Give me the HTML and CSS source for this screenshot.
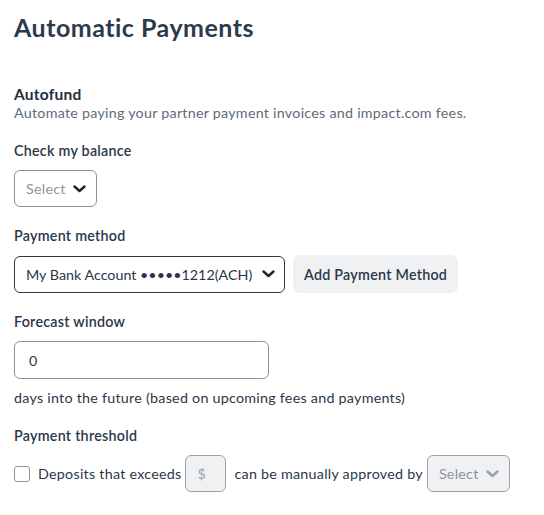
FILE: index.html
```html
<!DOCTYPE html>
<html>
<head>
<meta charset="utf-8">
<link rel="stylesheet" href="styles.css">
</head>
<body>
<div class="page">
  <h1 class="title">Automatic Payments</h1>
  <section class="section">
    <h2 class="section-title">Autofund</h2>
    <p class="section-desc">Automate paying your partner payment invoices and impact.com fees.</p>

    <div class="field">
      <div class="label">Check my balance</div>
      <div class="select select-small">
        <span class="placeholder">Select</span>
        <svg class="chev" width="13" height="8" viewBox="0 0 13 8"><path d="M1.5 1.5 L6.5 6 L11.5 1.5" fill="none" stroke="#1f2a38" stroke-width="2.5" stroke-linecap="round" stroke-linejoin="round"/></svg>
      </div>
    </div>

    <div class="field">
      <div class="label">Payment method</div>
      <div class="row">
        <div class="select select-dark select-wide">
          <span class="value">My Bank Account •••••1212(ACH)</span>
          <svg class="chev" width="13" height="8" viewBox="0 0 13 8"><path d="M1.5 1.5 L6.5 6 L11.5 1.5" fill="none" stroke="#1f2a38" stroke-width="2.5" stroke-linecap="round" stroke-linejoin="round"/></svg>
        </div>
        <button class="btn">Add Payment Method</button>
      </div>
    </div>

    <div class="field">
      <div class="label">Forecast window</div>
      <div class="input">0</div>
      <div class="hint">days into the future (based on upcoming fees and payments)</div>
    </div>

    <div class="field">
      <div class="label">Payment threshold</div>
      <div class="threshold">
        <span class="checkbox"></span>
        <span class="text">Deposits that exceeds</span>
        <span class="mini-input">$</span>
        <span class="text">can be manually approved by</span>
        <div class="select select-disabled">
          <span class="placeholder">Select</span>
          <svg class="chev" width="13" height="8" viewBox="0 0 13 8"><path d="M1.5 1.5 L6.5 6 L11.5 1.5" fill="none" stroke="#9aa1ab" stroke-width="2.5" stroke-linecap="round" stroke-linejoin="round"/></svg>
        </div>
      </div>
    </div>
  </section>
</div>
</body>
</html>
```

FILE: styles.css
```css
* { box-sizing: border-box; }
body {
  margin: 0;
  background: #fff;
  font-family: Lato, "Open Sans", sans-serif;
  color: #2b3748;
  letter-spacing: 0.25px;
}
.page { padding: 12px 14px; }
.title {
  margin: 0;
  font-size: 25px;
  font-weight: 700;
  letter-spacing: 0.5px;
  color: #2c3a4c;
  line-height: 30px;
}
.section { margin-top: 42px; }
.section-title {
  margin: 0;
  font-size: 15.5px;
  font-weight: 700;
  line-height: 20px;
  color: #222e3d;
}
.section-desc {
  margin: 0;
  font-size: 14.3px;
  line-height: 18px;
  color: #606b7a;
}
.field { margin-top: 20px; }
.label {
  font-size: 14.3px;
  font-weight: 600;
  line-height: 18px;
  color: #2b3748;
  margin-bottom: 10px;
}
.select {
  display: flex;
  align-items: center;
  justify-content: space-between;
  height: 37px;
  padding: 0 10px 0 11px;
  border: 1px solid #8d939b;
  border-radius: 6px;
  font-size: 14.3px;
}
.select-small { width: 83px; }
.placeholder { color: #8c94a0; }
.select-dark { border-color: #2b3748; }
.select-wide { width: 271px; padding-left: 11px; padding-right: 9px; }
.value { color: #2b3748; letter-spacing: 0; }
.row { display: flex; gap: 8px; align-items: center; }
.btn {
  height: 38px;
  padding: 0 11px;
  border: none;
  border-radius: 7px;
  background: #f0f1f3;
  font-family: inherit;
  font-size: 14.3px;
  font-weight: 600;
  letter-spacing: 0.25px;
  color: #2b3748;
}
.input {
  width: 255px;
  height: 38px;
  border: 1px solid #8d939b;
  border-radius: 6px;
  padding: 0 14px;
  display: flex;
  align-items: center;
  font-size: 14.3px;
  color: #2b3748;
}
.hint {
  margin-top: 10px;
  font-size: 14.3px;
  line-height: 18px;
  color: #2b3748;
}
.threshold {
  display: flex;
  align-items: center;
  gap: 4px;
  font-size: 14.3px;
}
.checkbox {
  width: 16px;
  height: 16px;
  border: 1px solid #8d939b;
  border-radius: 3px;
  margin-right: 4px;
}
.mini-input {
  width: 41px;
  height: 37px;
  border: 1px solid #9aa1ab;
  border-radius: 6px;
  background: #f0f1f3;
  color: #9aa1ab;
  display: flex;
  align-items: center;
  padding-left: 11px;
  margin-right: 4px;
}
.select-disabled {
  width: 83px;
  background: #f0f1f3;
  border-color: #9aa1ab;
}
```
